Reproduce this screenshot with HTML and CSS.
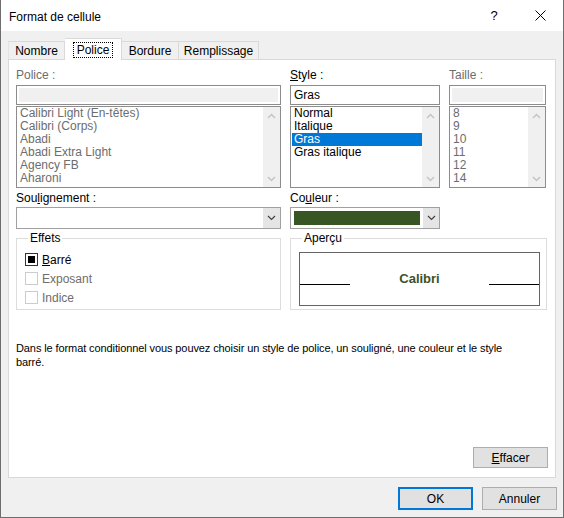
FILE: index.html
```html
<!DOCTYPE html>
<html>
<head>
    <title>Format de cellule</title>
    <link rel="stylesheet" href="styles.css">
</head>
<body>
    <div class="window">
        <div class="titlebar">
            <span class="title">Format de cellule</span>
            <span class="caption-btn">?</span>
            <span class="caption-btn">
                <svg width="11" height="11" viewBox="0 0 11 11"><path d="M0.5 0.5 L10.5 10.5 M10.5 0.5 L0.5 10.5" stroke="#000" stroke-width="1"/></svg>
            </span>
        </div>
        <div class="dialog-body">
            <div class="tabs">
                <div class="tab tab-nombre">Nombre</div>
                <div class="tab tab-police active"><span class="focus">Police</span></div>
                <div class="tab tab-bordure">Bordure</div>
                <div class="tab tab-remplissage">Remplissage</div>
            </div>
            <div class="panel">
                <div class="font-grid">
                    <div class="col">
                        <div class="label disabled">Police :</div>
                        <div class="textbox"><div class="textbox-off"></div></div>
                        <div class="listbox disabled">
                            <div class="items">
                                <div class="item">Calibri Light (En-têtes)</div>
                                <div class="item">Calibri (Corps)</div>
                                <div class="item">Abadi</div>
                                <div class="item">Abadi Extra Light</div>
                                <div class="item">Agency FB</div>
                                <div class="item">Aharoni</div>
                            </div>
                            <div class="scrollbar">
                                <svg width="9" height="6" viewBox="0 0 9 6"><path d="M1 5 L4.5 1.5 L8 5" fill="none" stroke="#c4c4c4" stroke-width="1.5"/></svg>
                                <svg width="9" height="6" viewBox="0 0 9 6"><path d="M1 1 L4.5 4.5 L8 1" fill="none" stroke="#c4c4c4" stroke-width="1.5"/></svg>
                            </div>
                        </div>
                    </div>
                    <div class="col">
                        <div class="label"><u>S</u>tyle :</div>
                        <div class="textbox"><span class="value">Gras</span></div>
                        <div class="listbox">
                            <div class="items">
                                <div class="item">Normal</div>
                                <div class="item">Italique</div>
                                <div class="item selected">Gras</div>
                                <div class="item">Gras italique</div>
                            </div>
                            <div class="scrollbar">
                                <svg width="9" height="6" viewBox="0 0 9 6"><path d="M1 5 L4.5 1.5 L8 5" fill="none" stroke="#c4c4c4" stroke-width="1.5"/></svg>
                                <svg width="9" height="6" viewBox="0 0 9 6"><path d="M1 1 L4.5 4.5 L8 1" fill="none" stroke="#c4c4c4" stroke-width="1.5"/></svg>
                            </div>
                        </div>
                    </div>
                    <div class="col">
                        <div class="label disabled">Taille :</div>
                        <div class="textbox"><div class="textbox-off"></div></div>
                        <div class="listbox disabled">
                            <div class="items">
                                <div class="item">8</div>
                                <div class="item">9</div>
                                <div class="item">10</div>
                                <div class="item">11</div>
                                <div class="item">12</div>
                                <div class="item">14</div>
                            </div>
                            <div class="scrollbar">
                                <svg width="9" height="6" viewBox="0 0 9 6"><path d="M1 5 L4.5 1.5 L8 5" fill="none" stroke="#c4c4c4" stroke-width="1.5"/></svg>
                                <svg width="9" height="6" viewBox="0 0 9 6"><path d="M1 1 L4.5 4.5 L8 1" fill="none" stroke="#c4c4c4" stroke-width="1.5"/></svg>
                            </div>
                        </div>
                    </div>
                </div>

                <div class="combo-row">
                    <div class="combo-col underline-col">
                        <div class="label combo-label">Sou<u>l</u>ignement :</div>
                        <div class="combo">
                            <div class="combo-value"></div>
                            <div class="dropdown">
                                <svg width="9" height="6" viewBox="0 0 9 6"><path d="M1 1 L4.5 4.5 L8 1" fill="none" stroke="#404040" stroke-width="1.2"/></svg>
                            </div>
                        </div>
                    </div>
                    <div class="combo-col color-col">
                        <div class="label combo-label">Co<u>u</u>leur :</div>
                        <div class="combo">
                            <div class="combo-value"><div class="swatch"></div></div>
                            <div class="dropdown">
                                <svg width="9" height="6" viewBox="0 0 9 6"><path d="M1 1 L4.5 4.5 L8 1" fill="none" stroke="#404040" stroke-width="1.2"/></svg>
                            </div>
                        </div>
                    </div>
                </div>

                <div class="group-row">
                    <fieldset class="group effects">
                        <legend>Effets</legend>
                        <div class="check-row">
                            <span class="checkbox checked"></span>
                            <span class="check-label"><u>B</u>arré</span>
                        </div>
                        <div class="check-row disabled">
                            <span class="checkbox"></span>
                            <span class="check-label">Exposant</span>
                        </div>
                        <div class="check-row disabled">
                            <span class="checkbox"></span>
                            <span class="check-label">Indice</span>
                        </div>
                    </fieldset>
                    <fieldset class="group preview-group">
                        <legend>Aperçu</legend>
                        <div class="preview">
                            <div class="baseline"></div>
                            <div class="sample">Calibri</div>
                            <div class="baseline"></div>
                        </div>
                    </fieldset>
                </div>

                <p class="note">Dans le format conditionnel vous pouvez choisir un style de police, un souligné, une couleur et le style barré.</p>

                <div class="clear-row">
                    <button class="btn"><u>E</u>ffacer</button>
                </div>
            </div>
            <div class="footer">
                <button class="btn btn-default">OK</button>
                <button class="btn">Annuler</button>
            </div>
        </div>
    </div>
</body>
</html>
```

FILE: styles.css
```css
/* Format de cellule dialog */
body {
    margin: 0;
    font-family: "Liberation Sans", Arial, sans-serif;
    font-size: 12px;
    color: #000;
}
.window {
    width: 564px;
    height: 518px;
    box-sizing: border-box;
    border: 1px solid #6e6e6e;
    border-top: none;
    background-color: #f0f0f0;
    display: flex;
    flex-direction: column;
}
.titlebar {
    height: 31px;
    background-color: #fff;
    display: flex;
    align-items: center;
}
.title {
    flex: 1;
    padding-left: 8px;
    padding-top: 2px;
}
.caption-btn {
    width: 46px;
    height: 31px;
    display: flex;
    align-items: center;
    justify-content: center;
    font-size: 13px;
}
.dialog-body {
    flex: 1;
    padding: 0 6px 0 7px;
    display: flex;
    flex-direction: column;
}

/* tabs */
.tabs {
    display: flex;
    align-items: flex-end;
    height: 21px;
    margin-top: 7px;
    position: relative;
    z-index: 1;
}
.tab {
    box-sizing: border-box;
    height: 18px;
    border: 1px solid #d9d9d9;
    border-bottom: none;
    border-left: none;
    text-align: center;
    line-height: 19px;
}
.tab-nombre {
    width: 57px;
    border-left: 1px solid #e4e4e4;
}
.tab-police {
    width: 57px;
}
.tab-bordure {
    width: 57px;
}
.tab-remplissage {
    width: 80px;
}
.tab.active {
    height: 22px;
    margin-bottom: -1px;
    background-color: #fff;
    line-height: 22px;
}
.focus {
    outline: 1px dotted #000;
    padding: 0 3px;
}

/* panel */
.panel {
    box-sizing: border-box;
    width: 548px;
    height: 419px;
    background-color: #fff;
    border: 1px solid #d9d9d9;
    padding: 7px 8px 9px 7px;
    display: flex;
    flex-direction: column;
}
.label {
    line-height: 17px;
    margin-bottom: 1px;
}
.label.disabled {
    color: #6d6d6d;
}
.font-grid {
    display: grid;
    grid-template-columns: 265px 150px 97px;
    column-gap: 9px;
}
.textbox {
    box-sizing: border-box;
    height: 20px;
    border: 1px solid #8c8c8c;
    padding: 2px;
}
.textbox-off {
    height: 100%;
    background-color: #f0f0f0;
}
.textbox .value {
    display: block;
    padding-left: 1px;
    line-height: 14px;
}
.listbox {
    box-sizing: border-box;
    height: 82px;
    margin-top: 1px;
    border: 1px solid #8c8c8c;
    display: flex;
}
.listbox .items {
    flex: 1;
}
.item {
    line-height: 13px;
    height: 13px;
    padding-left: 3px;
    white-space: nowrap;
}
.listbox.disabled .item {
    color: #6d6d6d;
}
.item.selected {
    background-color: #0078d7;
    color: #fff;
    margin-left: 1px;
    padding-left: 2px;
}
.scrollbar {
    width: 17px;
    background-color: #f0f0f0;
    display: flex;
    flex-direction: column;
    justify-content: space-between;
    align-items: center;
    padding: 6px 0 5px;
}

/* underline / colour combos */
.combo-row {
    display: flex;
    column-gap: 9px;
}
.underline-col {
    width: 265px;
}
.color-col {
    width: 150px;
}
.combo-label {
    padding-top: 2px;
    margin-bottom: 0;
}
.combo {
    box-sizing: border-box;
    height: 22px;
    border: 1px solid #a0a0a0;
    display: flex;
}
.combo-value {
    flex: 1;
    padding: 3px 3px 0 3px;
}
.swatch {
    height: 14px;
    background-color: #375623;
}
.dropdown {
    width: 16px;
    background-color: #e5e5e5;
    display: flex;
    align-items: center;
    justify-content: center;
}
.underline-col .dropdown {
    width: 17px;
}

/* groups */
.group-row {
    display: flex;
    column-gap: 9px;
    margin-top: 2px;
}
.group {
    box-sizing: border-box;
    height: 79px;
    margin: 0;
    padding: 0;
    border: 1px solid #dcdcdc;
}
.group legend {
    margin-left: 3px;
    padding: 0 2px;
    line-height: 15px;
}
.effects {
    width: 265px;
    padding: 4px 0 0 8px;
}
.preview-group {
    width: 257px;
    padding: 6px 0 0 8px;
}
.check-row {
    display: flex;
    align-items: center;
    height: 19px;
}
.checkbox {
    box-sizing: border-box;
    width: 13px;
    height: 13px;
    border: 1px solid #ccc;
    margin-right: 4px;
    padding: 2px;
}
.checkbox.checked {
    border-color: #333;
}
.checkbox.checked::after {
    content: "";
    display: block;
    width: 7px;
    height: 7px;
    background-color: #000;
}
.check-row.disabled .check-label {
    color: #6d6d6d;
}
.preview {
    box-sizing: border-box;
    width: 241px;
    height: 54px;
    border: 1px solid #646464;
    display: flex;
    align-items: flex-start;
}
.baseline {
    width: 50px;
    margin-top: 31px;
    border-top: 1px solid #000;
}
.sample {
    flex: 1;
    text-align: center;
    font-weight: bold;
    font-size: 13px;
    line-height: 18px;
    margin-top: 17px;
    color: #3b5229;
}

.note {
    margin: 31px 0 0;
    line-height: 14px;
    width: 510px;
    font-size: 11px;
    letter-spacing: -0.1px;
}
.clear-row {
    margin-top: auto;
    display: flex;
    justify-content: flex-end;
    margin-right: -1px;
}

/* buttons */
.btn {
    box-sizing: border-box;
    width: 75px;
    height: 21px;
    font-family: "Liberation Sans", Arial, sans-serif;
    font-size: 12px;
    color: #000;
    background-color: #e1e1e1;
    border: 1px solid #adadad;
    padding: 0;
}
.footer {
    display: flex;
    justify-content: flex-end;
    column-gap: 9px;
    padding-top: 9px;
}
.footer .btn {
    height: 23px;
}
.btn-default {
    border: 2px solid #0078d7;
}
```
